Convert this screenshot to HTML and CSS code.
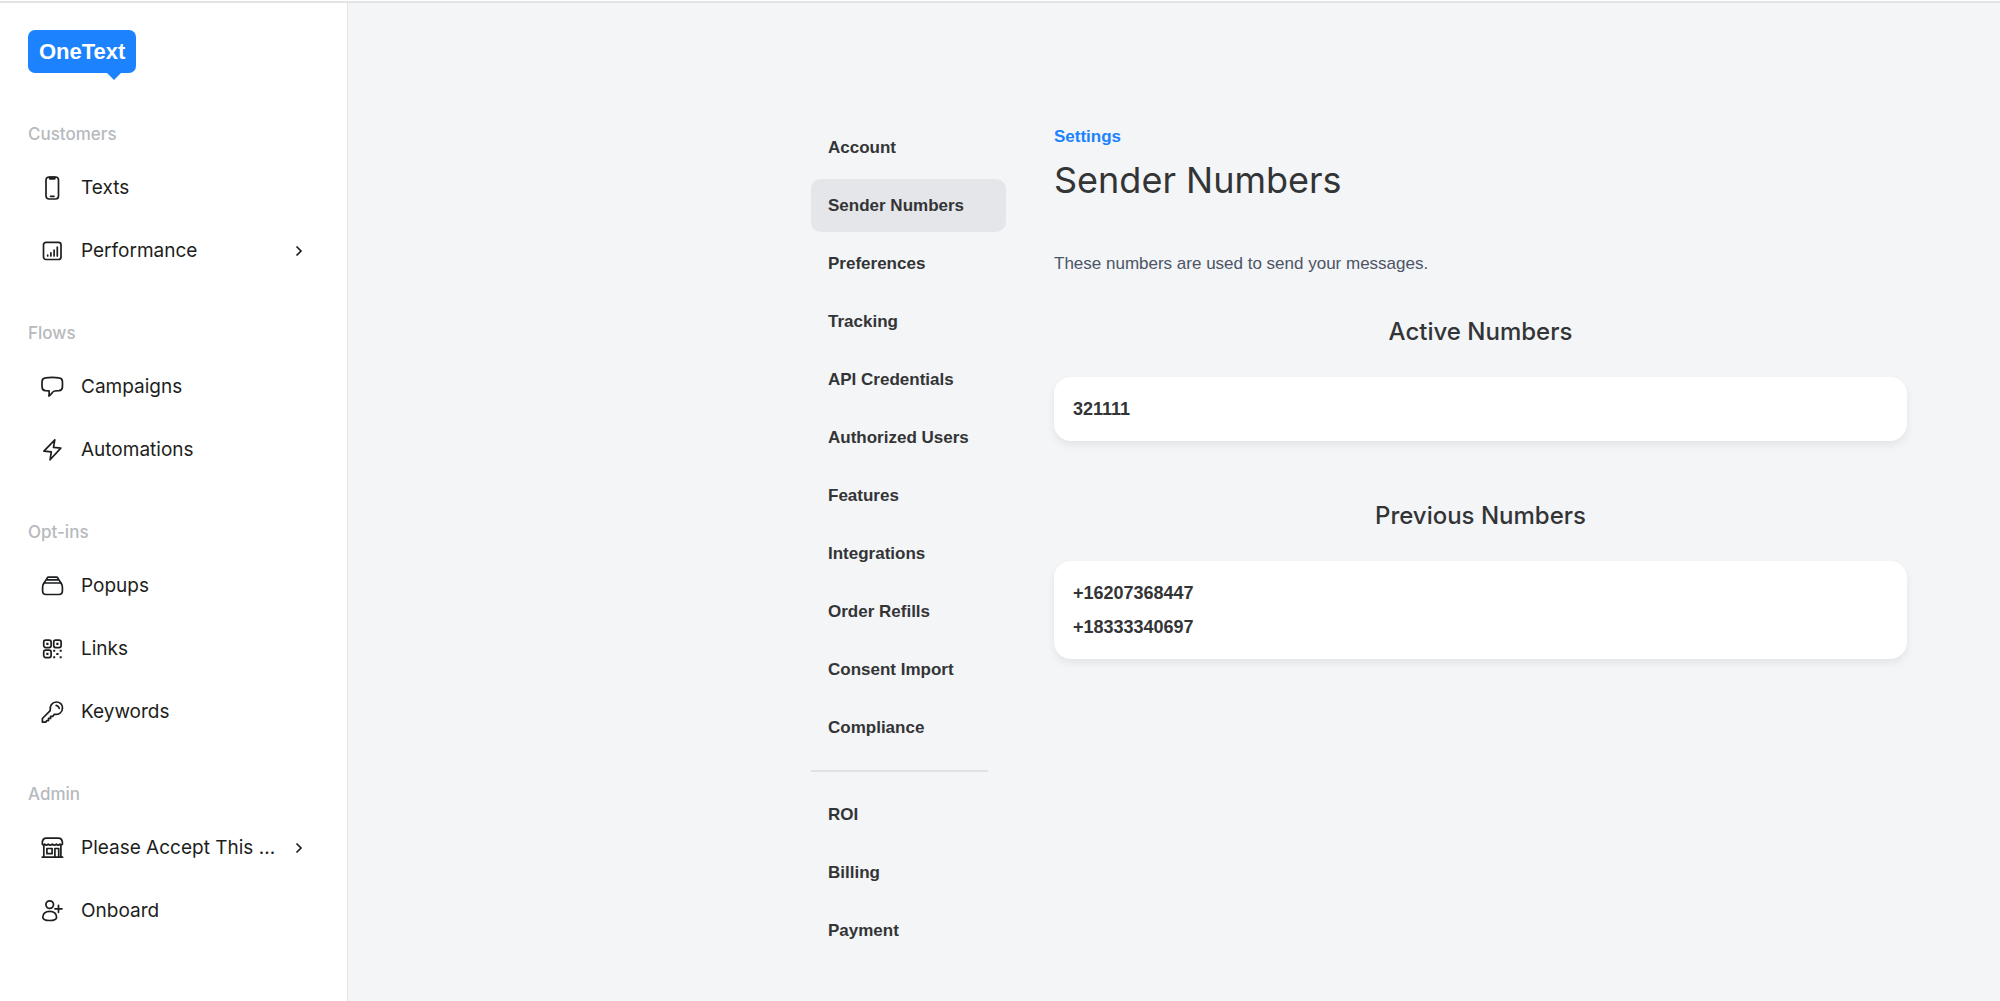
FILE: index.html
```
<!doctype html>
<html lang="en">
    <head>
        <meta charset="UTF-8" />
        <meta name="viewport" content="width=device-width, initial-scale=1.0" />
        <title>Sender Numbers - OneText</title>
        <link rel="stylesheet" href="styles.css">
    </head>
    <body>
        <!-- Sidebar -->
        <aside class="sidebar">
            <a class="logo" href="#">OneText</a>

            <nav class="menu">
                <section class="menu-group">
                    <h2 class="menu-label">Customers</h2>
                    <a class="menu-item" href="#">
                        <svg class="icon" viewBox="0 0 24 24">
                            <rect x="6" y="1" width="12.5" height="22" rx="3" />
                            <path d="M9.5 1.3h5.5v.6q0 1-1 1h-3.5q-1 0-1-1z" fill="currentColor" />
                            <path d="M10.5 20.3h3.5" />
                        </svg>
                        <span class="menu-text">Texts</span>
                    </a>
                    <a class="menu-item" href="#">
                        <svg class="icon" viewBox="0 0 24 24">
                            <rect x="3.5" y="3.3" width="17.5" height="17.2" rx="2.5" />
                            <path d="M7.7 17v-.8M10.9 17v-3.2M14.1 17v-5.800M17.300 17V8" />
                        </svg>
                        <span class="menu-text">Performance</span>
                        <svg class="chevron" viewBox="0 0 12 12"><path d="M3.5 1.500 8 6l-4.500 4.500" /></svg>
                    </a>
                </section>

                <section class="menu-group">
                    <h2 class="menu-label">Flows</h2>
                    <a class="menu-item" href="#">
                        <svg class="icon" viewBox="0 0 24 24">
                            <path d="M5.500 2.800Q12.200 1.900 19 2.800q3.200.3 3.400 3.300.2 3.100 0 6.300-.2 2.900-3.400 3.300l-4.200.3q-1.600.2-3 2.200Q10.500 20.100 8.900 21q.5-2.500.2-5.100l-3.600-.2Q2.300 15.400 2.100 12.400q-.2-3.200 0-6.300.2-3 3.400-3.300z" />
                        </svg>
                        <span class="menu-text">Campaigns</span>
                    </a>
                    <a class="menu-item" href="#">
                        <svg class="icon" viewBox="0 0 24 24">
                            <path d="M14.800 1.800 3.900 13.100l7.400.7-1.200 8L20.800 10.100l-7.300-.7z" />
                        </svg>
                        <span class="menu-text">Automations</span>
                    </a>
                </section>

                <section class="menu-group">
                    <h2 class="menu-label">Opt-ins</h2>
                    <a class="menu-item" href="#">
                        <svg class="icon" viewBox="0 0 24 24">
                            <path d="M3.900 9h17.200q1.300 2.200 1.300 4.500v3.600q0 3.400-3.400 3.400H6q-3.400 0-3.400-3.400v-3.600Q2.600 11.200 3.900 9z" />
                            <path d="M4.300 8.800 6 5.900h13l1.700 2.900M6.300 5.700l.8-1.600q.5-1 1.500-1h7.800q1 0 1.500 1l.8 1.600" />
                        </svg>
                        <span class="menu-text">Popups</span>
                    </a>
                    <a class="menu-item" href="#">
                        <svg class="icon" viewBox="0 0 24 24">
                            <rect x="3.700" y="3.200" width="7.400" height="7.400" rx="2" />
                            <rect x="13.700" y="3.200" width="7.400" height="7.400" rx="2" />
                            <rect x="3.700" y="13.200" width="7.400" height="7.400" rx="2" />
                            <path class="icon-fill" d="M6.300 5.800h2.200v2.200H6.300zM16.300 5.800h2.200v2.200h-2.200zM6.300 15.800h2.200v2.200H6.300zM13.200 12.700h2v2h-2zM19.700 12.700h2v2h-2zM16.300 15.900h2.200v2.200h-2.200zM13.200 19.200h2v2h-2zM19.700 19.200h2v2h-2z" />
                        </svg>
                        <span class="menu-text">Links</span>
                    </a>
                    <a class="menu-item" href="#">
                        <svg class="icon" viewBox="0 0 24 24">
                            <path d="M10.200 10.600C9.400 6 12.300 2 16.400 2c3.500 0 6.100 2.600 6.100 5.900 0 4.300-3.800 7.300-8.100 6.400l-1.700 2.100h-2.100v2H8.500v2.200H6.700l-.8 1.500H2.400v-3.600z" />
                            <path d="M16.200 5.300q2.400.5 3 3" />
                        </svg>
                        <span class="menu-text">Keywords</span>
                    </a>
                </section>

                <section class="menu-group">
                    <h2 class="menu-label">Admin</h2>
                    <a class="menu-item" href="#">
                        <svg class="icon" viewBox="0 0 24 24">
                            <path d="M2.300 6.400Q2.700 2.300 6.200 2.200h12.300q3.500.1 3.900 4.200v1.700q-1.200 1.300-2.500 0-1.600 2-3.500 0-2 2-4.100 0-2.100 2-4.100 0-1.900 2-3.500 0-1.300 1.300-2.400 0z" />
                            <path d="M3.800 9v12M20.900 9v12M2.300 21.200h20.300M6.900 12.500h5.200v5.200H6.900zM14.900 21v-8.500h3.800V21" />
                        </svg>
                        <span class="menu-text">Please Accept This ...</span>
                        <svg class="chevron" viewBox="0 0 12 12"><path d="M3.500 1.500 8 6l-4.500 4.500" /></svg>
                    </a>
                    <a class="menu-item" href="#">
                        <svg class="icon" viewBox="0 0 24 24">
                            <circle cx="9.700" cy="5.600" r="3.800" />
                            <path d="M2.800 18.200q.4-5.800 6.900-5.800t6.900 5.800q0 3.300-6.900 3.300t-6.900-3.300zM18.500 6.300v7M15 9.800h7" />
                        </svg>
                        <span class="menu-text">Onboard</span>
                    </a>
                </section>
            </nav>
        </aside>

        <!-- Settings -->
        <main class="main">
            <div class="settings">
                <nav class="settings-nav">
                    <a class="settings-link" href="#">Account</a>
                    <a class="settings-link active" href="#">Sender Numbers</a>
                    <a class="settings-link" href="#">Preferences</a>
                    <a class="settings-link" href="#">Tracking</a>
                    <a class="settings-link" href="#">API Credentials</a>
                    <a class="settings-link" href="#">Authorized Users</a>
                    <a class="settings-link" href="#">Features</a>
                    <a class="settings-link" href="#">Integrations</a>
                    <a class="settings-link" href="#">Order Refills</a>
                    <a class="settings-link" href="#">Consent Import</a>
                    <a class="settings-link" href="#">Compliance</a>
                    <hr class="divider" />
                    <a class="settings-link" href="#">ROI</a>
                    <a class="settings-link" href="#">Billing</a>
                    <a class="settings-link" href="#">Payment</a>
                </nav>

                <div class="content">
                    <a class="breadcrumb" href="#">Settings</a>
                    <h1 class="title">Sender Numbers</h1>
                    <p class="description">These numbers are used to send your messages.</p>

                    <section class="numbers">
                        <h2 class="numbers-title">Active Numbers</h2>
                        <ul class="card">
                            <li>321111</li>
                        </ul>
                    </section>

                    <section class="numbers">
                        <h2 class="numbers-title">Previous Numbers</h2>
                        <ul class="card">
                            <li>+16207368447</li>
                            <li>+18333340697</li>
                        </ul>
                    </section>
                </div>
            </div>
        </main>
    </body>
</html>
```
FILE: styles.css
```
* {
    box-sizing: border-box;
}
html {
    padding-top: 1px;
    background: #fff;
}
body {
    display: flex;
    min-height: calc(100vh - 1px);
    margin: 0;
    border-top: 2px solid #e2e3e5;
    background: #f3f5f7;
    color: #333436;
    font-family: "Liberation Sans", Arial, sans-serif;
    font-size: 17px;
}
a {
    color: inherit;
    text-decoration: none;
}

/* Sidebar */
.sidebar {
    flex: 0 0 348px;
    min-width: 0;
    padding: 27px 28px;
    border-right: 1px solid #e2e4e6;
    background: #fff;
    font-family: Inter, sans-serif;
}
.logo {
    position: relative;
    display: inline-block;
    padding: 0 11px;
    border-radius: 7px;
    background: #1c82fd;
    color: #fff;
    font-family: "Liberation Sans", Arial, sans-serif;
    font-size: 22px;
    font-weight: bold;
    line-height: 43px;
}
.logo::after {
    content: "";
    position: absolute;
    top: 100%;
    right: 15px;
    border: 7px solid transparent;
    border-top-color: #1c82fd;
    border-bottom: 0;
}
.menu {
    display: flex;
    flex-direction: column;
    gap: 30px;
    margin-top: 40px;
}
.menu-label {
    margin: 0;
    color: #b6b9bd;
    font-size: 17px;
    font-weight: 500;
    line-height: 43px;
}
.menu-item {
    display: flex;
    align-items: center;
    height: 63px;
    padding: 0 14px 0 12px;
    color: #1d1e20;
    font-size: 19px;
}
.icon {
    flex: none;
    width: 24px;
    height: 24px;
    margin-right: 17px;
    fill: none;
    stroke: currentColor;
    stroke-width: 1.7;
    stroke-linecap: round;
    stroke-linejoin: round;
}
.icon-fill {
    fill: currentColor;
    stroke: none;
}
.menu-text {
    flex: 1;
    overflow: hidden;
    text-overflow: ellipsis;
    white-space: nowrap;
}
.chevron {
    flex: none;
    width: 12px;
    height: 12px;
    margin-left: 12px;
    fill: none;
    stroke: currentColor;
    stroke-width: 1.7;
}

/* Settings */
.main {
    flex: 1;
    min-width: 0;
    padding: 118px 93px 40px;
}
.settings {
    display: grid;
    grid-template-columns: 195px 1fr;
    gap: 48px;
    max-width: 1096px;
    margin-left: auto;
}
.settings-nav {
    display: flex;
    flex-direction: column;
    gap: 5px;
}
.settings-link {
    padding: 0 17px;
    border-radius: 10px;
    font-weight: bold;
    line-height: 53px;
}
.settings-link.active {
    background: #e5e6ea;
}
.divider {
    width: 177px;
    height: 2px;
    margin: 11px 0;
    border: 0;
    background: #dfe1e4;
}
.breadcrumb {
    display: block;
    margin-top: 4px;
    color: #1c82fd;
    font-weight: bold;
    line-height: 24px;
}
.title {
    margin: 5px 0 0;
    font-family: Inter, sans-serif;
    font-size: 36px;
    font-weight: 400;
    line-height: 52px;
}
.description {
    margin: 45px 0 0;
    color: #4c5466;
    line-height: 26px;
}
.numbers {
    margin-top: 40px;
}
.numbers + .numbers {
    margin-top: 60px;
}
.numbers-title {
    margin: 0;
    font-family: Inter, sans-serif;
    font-size: 24px;
    font-weight: 500;
    line-height: 30px;
    text-align: center;
}
.card {
    margin: 30px 0 0;
    padding: 15px 19px;
    border-radius: 17px;
    background: #fff;
    box-shadow: 0 4px 8px rgba(0, 0, 0, 0.07);
    font-size: 18px;
    font-weight: bold;
    line-height: 34px;
    list-style: none;
}
```
